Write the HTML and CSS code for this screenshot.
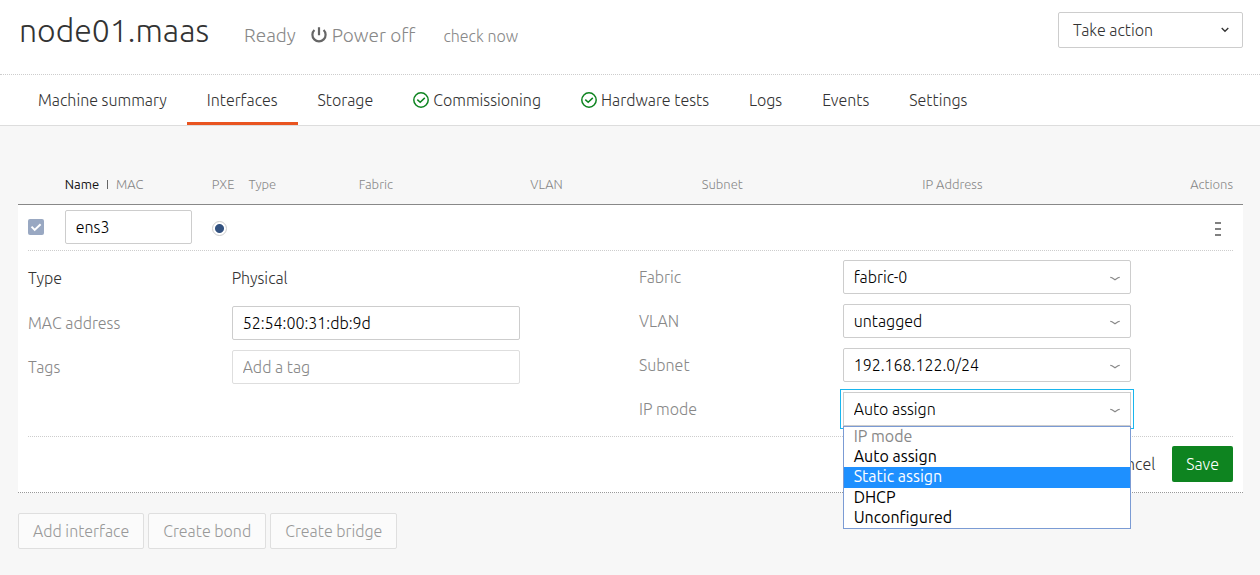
FILE: index.html
```html
<!DOCTYPE html>
<html lang="en">
<head>
<meta charset="utf-8">
<title>node01.maas interfaces</title>
<link rel="stylesheet" href="styles.css">
</head>
<body>
<header class="machine-header">
  <h1 class="machine-name">node01.maas</h1>
  <span class="status">Ready</span>
  <span class="status power">
    <svg class="power-icon" viewBox="0 0 16 16" aria-hidden="true"><path d="M3.400 3A6.600 6.600 0 1 0 12.600 3M8 .3v8" fill="none" stroke="#666" stroke-width="2.200"/></svg>
    Power off
  </span>
  <a class="check-now" href="#">check now</a>
  <button class="take-action" type="button">Take action
    <svg class="action-chevron" viewBox="0 0 8 6" aria-hidden="true"><path d="M.7 1 4 4.3 7.3 1" fill="none" stroke="#333" stroke-width="1.3"/></svg>
  </button>
</header>
<nav class="tabs">
  <a class="tab" href="#">Machine summary</a>
  <a class="tab tab-active" href="#" aria-current="page">Interfaces</a>
  <a class="tab" href="#">Storage</a>
  <a class="tab" href="#"><svg class="pass-icon" viewBox="0 0 16 16" aria-hidden="true"><g fill="none" stroke="#0e8420" stroke-width="1.5"><circle cx="8" cy="8" r="7.2"/><path d="m4.3 7.6 2.9 2.7 4.6-4.4"/></g></svg>Commissioning</a>
  <a class="tab" href="#"><svg class="pass-icon" viewBox="0 0 16 16" aria-hidden="true"><g fill="none" stroke="#0e8420" stroke-width="1.5"><circle cx="8" cy="8" r="7.2"/><path d="m4.3 7.6 2.9 2.7 4.6-4.4"/></g></svg>Hardware tests</a>
  <a class="tab" href="#">Logs</a>
  <a class="tab" href="#">Events</a>
  <a class="tab" href="#">Settings</a>
</nav>
<main class="content">
  <form>
    <table class="interfaces">
      <colgroup>
        <col class="col-check"><col class="col-name"><col class="col-pxe"><col class="col-type">
        <col class="col-wide"><col class="col-wide"><col class="col-subnet"><col>
        <col class="col-actions">
      </colgroup>
      <thead>
        <tr>
          <th></th>
          <th><span class="sorted">Name</span><span class="divider"></span>MAC</th>
          <th>PXE</th>
          <th>Type</th>
          <th>Fabric</th>
          <th>VLAN</th>
          <th>Subnet</th>
          <th>IP Address</th>
          <th class="align-right">Actions</th>
        </tr>
      </thead>
      <tbody>
        <tr class="interface-row">
          <td>
            <span class="check-wrap">
              <input class="check" type="checkbox" checked aria-label="Select ens3">
              <svg class="check-mark" viewBox="0 0 16 16" aria-hidden="true"><path d="m3.5 7.6 3.2 3.3 5.9-5.7" fill="none" stroke="#fff" stroke-width="2"/></svg>
            </span>
          </td>
          <td><input class="field" type="text" value="ens3" aria-label="Name"></td>
          <td><input class="pxe" type="radio" checked aria-label="PXE"></td>
          <td colspan="5"></td>
          <td class="align-right">
            <button class="menu-button" type="button" aria-label="Actions"><svg class="menu-icon" viewBox="0 0 6 14" aria-hidden="true"><path d="M0 0h6v2H0zM0 6h6v2H0zM0 12h6v2H0z" fill="#808080"/></svg></button>
          </td>
        </tr>
        <tr class="details-row">
          <td colspan="9">
            <div class="details">
              <div class="fields">
                <span class="label label-dark">Type</span>
                <span class="value">Physical</span>
                <label class="label" for="mac">MAC address</label>
                <input class="field control" id="mac" type="text" value="52:54:00:31:db:9d">
                <label class="label" for="tags">Tags</label>
                <input class="field control field-light" id="tags" type="text" placeholder="Add a tag">
              </div>
              <div class="fields">
                <label class="label" for="fabric">Fabric</label>
                <div class="control select-wrap">
                  <select class="field" id="fabric"><option>fabric-0</option></select>
                  <svg class="chevron" viewBox="0 0 10 6" aria-hidden="true"><path d="M.3 1.400 2 1.700 5 3.700 8 1.700 9.700 1.400" fill="none" stroke="#888" stroke-width="1.2"/></svg>
                </div>
                <label class="label" for="vlan">VLAN</label>
                <div class="control select-wrap">
                  <select class="field" id="vlan"><option>untagged</option></select>
                  <svg class="chevron" viewBox="0 0 10 6" aria-hidden="true"><path d="M.3 1.400 2 1.700 5 3.700 8 1.700 9.700 1.400" fill="none" stroke="#888" stroke-width="1.2"/></svg>
                </div>
                <label class="label" for="subnet">Subnet</label>
                <div class="control select-wrap">
                  <select class="field" id="subnet"><option>192.168.122.0/24</option></select>
                  <svg class="chevron" viewBox="0 0 10 6" aria-hidden="true"><path d="M.3 1.400 2 1.700 5 3.700 8 1.700 9.700 1.400" fill="none" stroke="#888" stroke-width="1.2"/></svg>
                </div>
                <label class="label" for="ip-mode">IP mode</label>
                <div class="control select-wrap">
                  <select class="field field-open" id="ip-mode"><option>Auto assign</option></select>
                  <svg class="chevron" viewBox="0 0 10 6" aria-hidden="true"><path d="M.3 1.400 2 1.700 5 3.700 8 1.700 9.700 1.400" fill="none" stroke="#888" stroke-width="1.2"/></svg>
                  <ul class="options" role="listbox" aria-label="IP mode">
                    <li class="option option-disabled" role="option" aria-disabled="true">IP mode</li>
                    <li class="option" role="option">Auto assign</li>
                    <li class="option option-highlight" role="option" aria-selected="true">Static assign</li>
                    <li class="option" role="option">DHCP</li>
                    <li class="option" role="option">Unconfigured</li>
                  </ul>
                </div>
              </div>
            </div>
            <div class="form-actions">
              <button class="cancel" type="button">Cancel</button>
              <button class="save" type="submit">Save</button>
            </div>
          </td>
        </tr>
      </tbody>
    </table>
  </form>
  <div class="toolbar">
    <button class="tool" type="button" disabled>Add interface</button>
    <button class="tool" type="button" disabled>Create bond</button>
    <button class="tool" type="button" disabled>Create bridge</button>
  </div>
</main>
</body>
</html>
```
FILE: styles.css
```css
* {
  box-sizing: border-box;
}

body {
  margin: 0;
  background: #f7f7f7;
  color: #333;
  font: 300 16px/24px Ubuntu, "Open Sans", sans-serif;
}

button,
input,
select {
  font: inherit;
  color: inherit;
}

a {
  color: inherit;
  text-decoration: none;
}

.machine-header {
  display: flex;
  align-items: baseline;
  padding: 12px 17px 26px 19px;
  background: #fff;
  border-bottom: 1px dotted #cdcdcd;
}

.machine-name {
  margin: 0 35px 0 0;
  font-size: 32px;
  font-weight: 300;
  line-height: 36px;
}

.status {
  margin-right: 15px;
  color: #888;
  font-size: 19px;
}

.power {
  display: flex;
  align-items: baseline;
  gap: 5px;
  margin-right: 28px;
}

.power-icon {
  width: 16px;
  height: 16px;
  align-self: center;
}

.check-now {
  color: #888;
}

.take-action {
  display: flex;
  align-items: center;
  justify-content: space-between;
  align-self: flex-start;
  width: 185px;
  height: 36px;
  margin-left: auto;
  padding: 0 13px 0 14px;
  background: #fff;
  border: 1px solid #cdcdcd;
  border-radius: 2px;
}

.action-chevron {
  width: 8px;
  height: 6px;
}

.tabs {
  display: flex;
  padding: 0 18px;
  background: #fff;
  border-bottom: 1px solid #ddd;
}

.tab {
  display: flex;
  align-items: center;
  gap: 4px;
  height: 50px;
  padding: 3px 20px 0;
  border-bottom: 3px solid transparent;
}

.tab-active {
  border-bottom-color: #e95420;
}

.pass-icon {
  width: 16px;
  height: 16px;
}

.content {
  padding: 38px 17px 26px 18px;
}

.interfaces {
  width: 100%;
  table-layout: fixed;
  border-collapse: separate;
  border-spacing: 0;
}

.col-check,
.col-pxe {
  width: 3%;
}

.col-name {
  width: 12%;
}

.col-type {
  width: 9%;
}

.col-wide {
  width: 14%;
}

.col-subnet {
  width: 18%;
}

.col-actions {
  width: 10%;
}

.interfaces th {
  height: 41px;
  padding: 0 10px;
  border-bottom: 1px solid #888;
  color: #888;
  font-size: 13px;
  font-weight: 300;
  text-align: left;
  white-space: nowrap;
}

.interfaces td {
  padding: 5px 10px 6px;
  background: #fff;
}

.interfaces .align-right {
  text-align: right;
}

.sorted {
  color: #111;
  font-weight: 400;
}

.divider {
  display: inline-block;
  height: 9px;
  margin: 0 8px;
  border-left: 1px solid #666;
}

.check-wrap {
  display: grid;
  width: 16px;
}

.check,
.check-mark {
  grid-area: 1 / 1;
  width: 16px;
  height: 16px;
  margin: 0;
}

.check {
  appearance: none;
  background: #99a8c2;
  border-radius: 2px;
}

.check-mark {
  pointer-events: none;
}

.pxe {
  display: block;
  appearance: none;
  width: 15px;
  height: 15px;
  margin: 2px 0 0;
  border: 1px solid #cdcdcd;
  border-radius: 50%;
  background: radial-gradient(circle, #335280 4px, #fff 5px);
}

.menu-button {
  display: inline-flex;
  align-items: center;
  height: 24px;
  margin: 0;
  padding: 3px 12px 0;
  background: none;
  border: 0;
  vertical-align: middle;
}

.menu-icon {
  width: 6px;
  height: 14px;
}

.field {
  display: block;
  width: 100%;
  height: 34px;
  padding: 0 10px;
  appearance: none;
  background: #fff;
  border: 1px solid #cdcdcd;
  border-radius: 2px;
  color: #000;
}

.field-light {
  border-color: #dedede;
}

.field::placeholder {
  color: #888;
  opacity: 1;
}

.interfaces .details-row td {
  padding: 0 10px 10px;
  border-bottom: 1px dotted #999;
}

.details {
  display: grid;
  grid-template-columns: 1fr 1fr;
  column-gap: 17px;
  padding: 9px 0 10px;
  border-top: 1px dotted #cdcdcd;
  border-bottom: 1px dotted #cdcdcd;
}

.fields {
  display: grid;
  grid-template-columns: repeat(6, 1fr);
  gap: 10px 17px;
  align-content: start;
}

.label,
.value {
  line-height: 34px;
}

.label {
  grid-column: 1 / span 2;
  color: #888;
}

.label-dark {
  color: #333;
}

.value {
  grid-column: 3 / span 3;
  padding: 1px 0;
}

.label-dark {
  padding: 1px 0;
}

.control {
  grid-column: 3 / span 3;
}

.select-wrap {
  position: relative;
}

.chevron {
  position: absolute;
  top: 16px;
  right: 11px;
  width: 10px;
  height: 6px;
  pointer-events: none;
}

.field-open {
  border-radius: 0;
  outline: 1px solid #19b6ee;
  outline-offset: 2px;
}

.options {
  position: absolute;
  z-index: 1;
  top: 100%;
  left: 0;
  width: 100%;
  margin: 0;
  padding: 0;
  background: #fff;
  border: 1px solid #7b9bd4;
  color: #000;
  font-weight: 400;
  list-style: none;
}

.option {
  padding: 0 10px 2px;
  line-height: 18px;
}

.option-disabled {
  color: #888;
}

.option-highlight {
  padding-bottom: 3px;
  background: #1e90ff;
  color: #fff;
}

.form-actions {
  display: flex;
  justify-content: flex-end;
  gap: 3px;
  padding-top: 9px;
}

.cancel,
.save {
  height: 36px;
  padding: 0 14px;
  border: 0;
  border-radius: 2px;
}

.cancel {
  background: none;
}

.save {
  background: #0e8420;
  color: #fff;
}

.toolbar {
  display: flex;
  gap: 4px;
  margin-top: 20px;
}

.tool {
  height: 36px;
  padding: 0 14px;
  background: #fbfbfb;
  border: 1px solid #dfdfdf;
  border-radius: 2px;
  color: #999;
}
```
